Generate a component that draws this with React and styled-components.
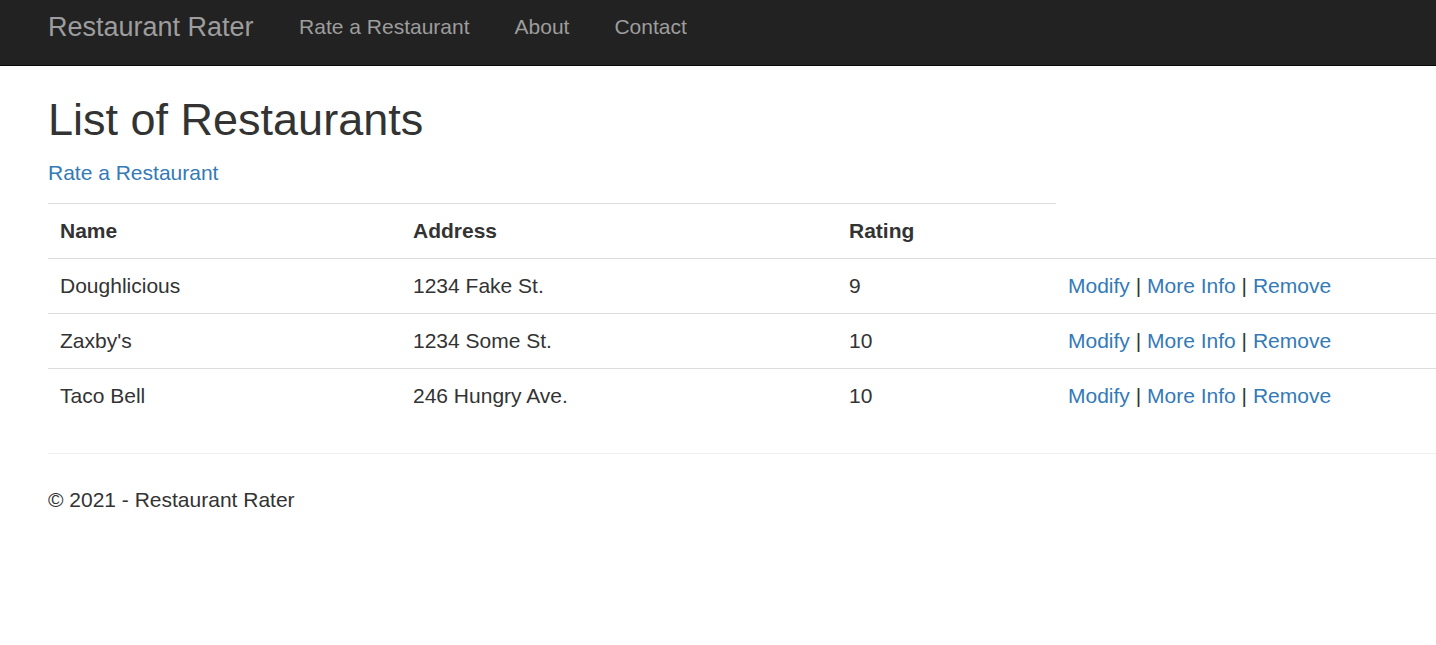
import React from 'react';
import styled, { createGlobalStyle } from 'styled-components';

const GlobalStyle = createGlobalStyle`
  html, body {
    margin: 0;
    padding: 0;
    background: #fff;
  }
  body {
    font-family: "Liberation Sans", Arial, Helvetica, sans-serif;
    font-size: 21px;
    line-height: 30px;
    color: #333;
    overflow-x: hidden;
  }
`;

const NavBar = styled.nav`
  height: 65px;
  background: #222;
  border-bottom: 1px solid #080808;
  display: flex;
  align-items: center;
  padding-left: 48px;
  box-sizing: content-box;
`;

const Brand = styled.a`
  font-size: 27px;
  line-height: 30px;
  color: #9d9d9d;
  text-decoration: none;
  padding-right: 23px;
  margin-top: -11px;
`;

const NavLink = styled.a`
  font-size: 21px;
  line-height: 30px;
  color: #9d9d9d;
  text-decoration: none;
  padding: 0 22.5px;
  margin-top: -11px;
`;

const Main = styled.main`
  padding-left: 48px;
`;

const Title = styled.h2`
  font-size: 45px;
  font-weight: 500;
  line-height: 49.5px;
  margin: 29px 0 13px;
`;

const Link = styled.a`
  color: #337ab7;
  text-decoration: none;
`;

const Para = styled.p`
  margin: 0 0 15px;
`;

const Table = styled.table`
  width: 100%;
  table-layout: fixed;
  border-collapse: collapse;
  border-spacing: 0;
  margin-bottom: 30px;
`;

const Cell = styled.td`
  padding: 12px;
  line-height: 30px;
  border-top: 1px solid #ddd;
  vertical-align: top;
  text-align: left;
  font-weight: ${p => (p.$head ? 700 : 400)};
  white-space: nowrap;
`;

const Sep = styled.span`
  color: #333;
`;

const Rule = styled.hr`
  border: 0;
  border-top: 1px solid #eee;
  margin: 0 0 31px;
`;

const Footer = styled.footer`
  margin: 0;
`;

const FooterText = styled.p`
  margin: 0;
`;

const rows = [
  { name: 'Doughlicious', address: '1234 Fake St.', rating: 9 },
  { name: "Zaxby's", address: '1234 Some St.', rating: 10 },
  { name: 'Taco Bell', address: '246 Hungry Ave.', rating: 10 },
];

const App = () => (
  <>
    <GlobalStyle />
    <NavBar>
      <Brand href="#">Restaurant Rater</Brand>
      <NavLink href="#">Rate a Restaurant</NavLink>
      <NavLink href="#">About</NavLink>
      <NavLink href="#">Contact</NavLink>
    </NavBar>
    <Main>
      <Title>List of Restaurants</Title>
      <Para>
        <Link href="#">Rate a Restaurant</Link>
      </Para>
      <Table>
        <colgroup>
          <col style={{ width: 353 }} />
          <col style={{ width: 436 }} />
          <col style={{ width: 219 }} />
          <col />
        </colgroup>
        <tbody>
          <tr>
            <Cell as="th" $head>Name</Cell>
            <Cell as="th" $head>Address</Cell>
            <Cell as="th" $head>Rating</Cell>
          </tr>
          {rows.map(r => (
            <tr key={r.name}>
              <Cell>{r.name}</Cell>
              <Cell>{r.address}</Cell>
              <Cell>{r.rating}</Cell>
              <Cell>
                <Link href="#">Modify</Link> <Sep>|</Sep>{' '}
                <Link href="#">More Info</Link> <Sep>|</Sep>{' '}
                <Link href="#">Remove</Link>
              </Cell>
            </tr>
          ))}
        </tbody>
      </Table>
      <Rule />
      <Footer>
        <FooterText>© 2021 - Restaurant Rater</FooterText>
      </Footer>
    </Main>
  </>
);

export default App;
